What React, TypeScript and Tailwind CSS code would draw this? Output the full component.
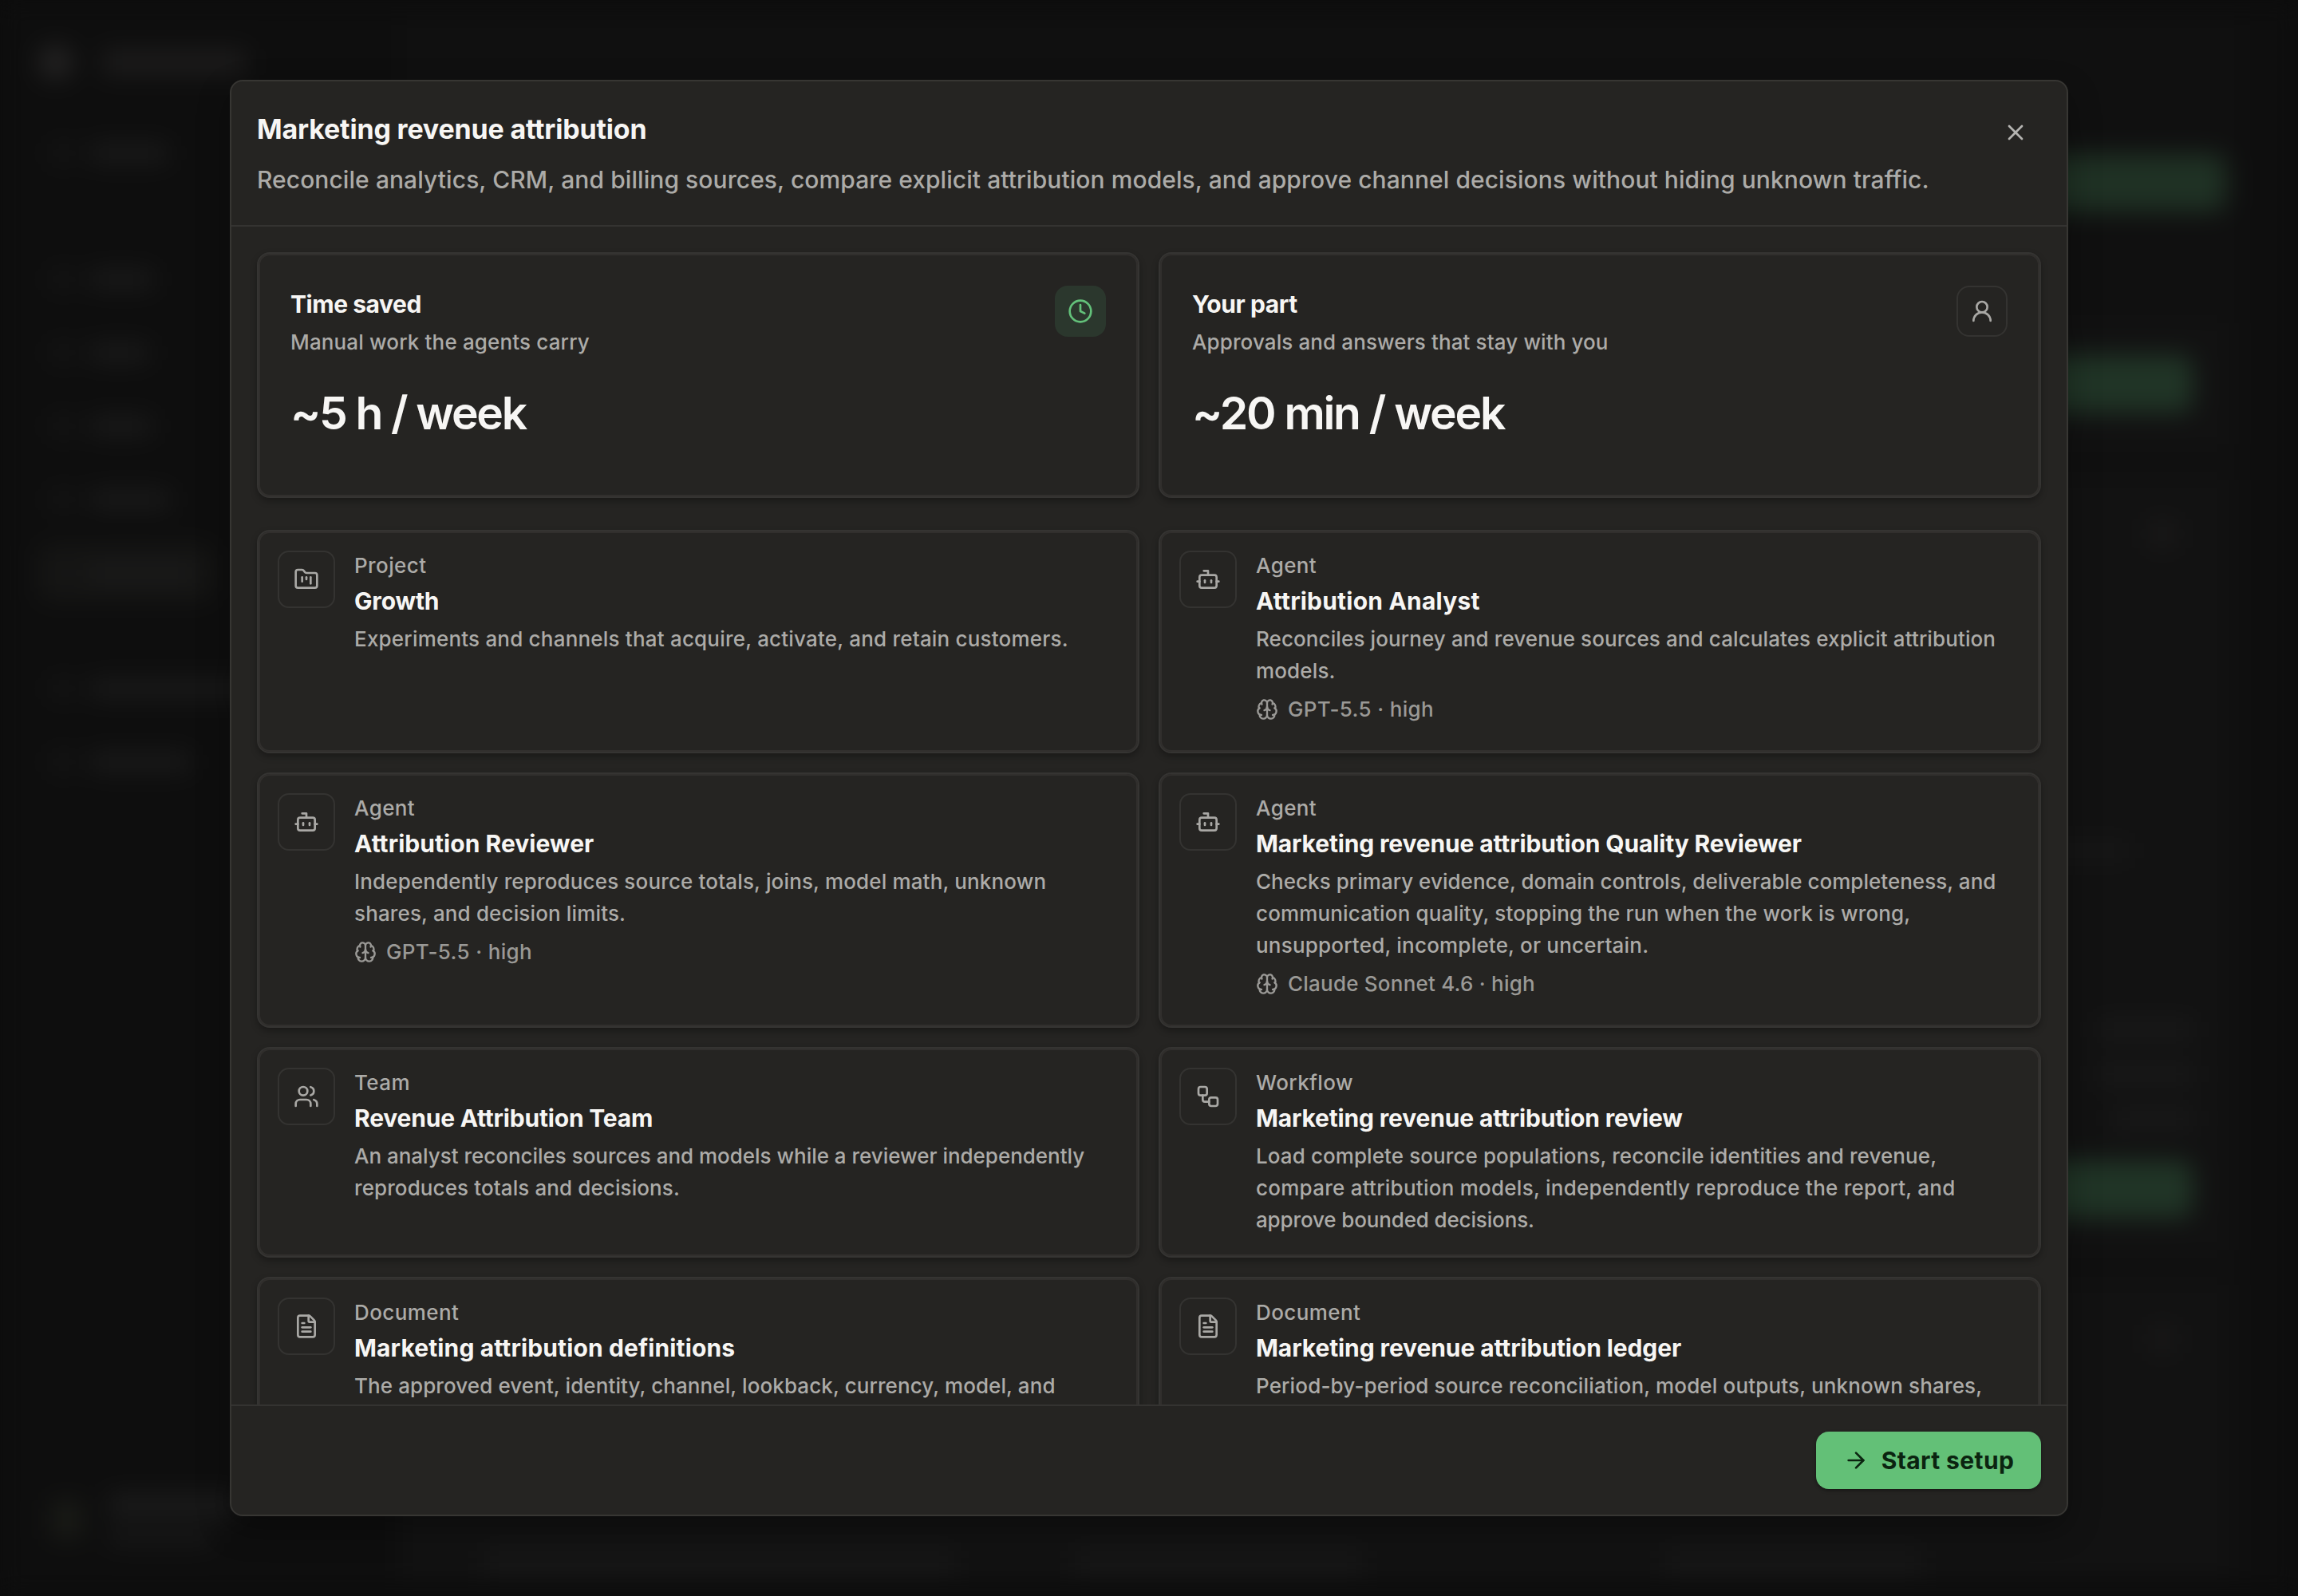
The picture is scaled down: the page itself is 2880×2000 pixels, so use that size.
import clsx from 'clsx';
import {
  ArrowRight,
  Bot,
  Brain,
  Clock,
  FileText,
  FolderKanban,
  UserRound,
  Users,
  Workflow,
  X,
  type LucideIcon,
} from 'lucide-react';

type Line = { text: string; spacing: string };

type Item = {
  icon: LucideIcon;
  kind: string;
  name: Line;
  lines: Line[];
  model?: Line;
};

const rows: { height: string; items: Item[] }[] = [
  {
    height: 'h-[280px]',
    items: [
      {
        icon: FolderKanban,
        kind: 'Project',
        name: { text: 'Growth', spacing: 'tracking-[-0.15px]' },
        lines: [
          { text: 'Experiments and channels that acquire, activate, and retain customers.', spacing: 'tracking-[0.2px]' },
        ],
      },
      {
        icon: Bot,
        kind: 'Agent',
        name: { text: 'Attribution Analyst', spacing: 'tracking-[0.21px]' },
        lines: [
          { text: 'Reconciles journey and revenue sources and calculates explicit attribution', spacing: 'tracking-[0.1px]' },
          { text: 'models.', spacing: 'tracking-[0.15px]' },
        ],
        model: { text: 'GPT-5.5 · high', spacing: 'tracking-[0.35px]' },
      },
    ],
  },
  {
    height: 'h-[320px]',
    items: [
      {
        icon: Bot,
        kind: 'Agent',
        name: { text: 'Attribution Reviewer', spacing: 'tracking-[0.05px]' },
        lines: [
          { text: 'Independently reproduces source totals, joins, model math, unknown', spacing: 'tracking-[0.15px]' },
          { text: 'shares, and decision limits.', spacing: 'tracking-[0.14px]' },
        ],
        model: { text: 'GPT-5.5 · high', spacing: 'tracking-[0.35px]' },
      },
      {
        icon: Bot,
        kind: 'Agent',
        name: { text: 'Marketing revenue attribution Quality Reviewer', spacing: 'tracking-[-0.15px]' },
        lines: [
          { text: 'Checks primary evidence, domain controls, deliverable completeness, and', spacing: 'tracking-[0.03px]' },
          { text: 'communication quality, stopping the run when the work is wrong,', spacing: 'tracking-[0.15px]' },
          { text: 'unsupported, incomplete, or uncertain.', spacing: 'tracking-[0.2px]' },
        ],
        model: { text: 'Claude Sonnet 4.6 · high', spacing: 'tracking-[0.22px]' },
      },
    ],
  },
  {
    height: 'h-[264px]',
    items: [
      {
        icon: Users,
        kind: 'Team',
        name: { text: 'Revenue Attribution Team', spacing: 'tracking-[-0.2px]' },
        lines: [
          { text: 'An analyst reconciles sources and models while a reviewer independently', spacing: 'tracking-[-0.02px]' },
          { text: 'reproduces totals and decisions.', spacing: 'tracking-[0.1px]' },
        ],
      },
      {
        icon: Workflow,
        kind: 'Workflow',
        name: { text: 'Marketing revenue attribution review', spacing: 'tracking-[-0.17px]' },
        lines: [
          { text: 'Load complete source populations, reconcile identities and revenue,', spacing: 'tracking-[0.09px]' },
          { text: 'compare attribution models, independently reproduce the report, and', spacing: 'tracking-[0.25px]' },
          { text: 'approve bounded decisions.', spacing: 'tracking-[-0.14px]' },
        ],
      },
    ],
  },
  {
    height: 'h-[264px]',
    items: [
      {
        icon: FileText,
        kind: 'Document',
        name: { text: 'Marketing attribution definitions', spacing: 'tracking-[0.12px]' },
        lines: [
          { text: 'The approved event, identity, channel, lookback, currency, model, and', spacing: 'tracking-[0.09px]' },
        ],
      },
      {
        icon: FileText,
        kind: 'Document',
        name: { text: 'Marketing revenue attribution ledger', spacing: 'tracking-[-0.1px]' },
        lines: [
          { text: 'Period-by-period source reconciliation, model outputs, unknown shares,', spacing: 'tracking-[0.15px]' },
        ],
      },
    ],
  },
];

const cardClass =
  'rounded-[16px] border-2 border-[#353432] bg-[#252422] shadow-[0_4px_8px_rgba(0,0,0,0.3),inset_0_0_0_2px_#312f2d]';

type StatProps = { title: Line; hint: Line; value: Line; icon: LucideIcon; green?: boolean };

function StatCard({ title, hint, value, icon: Icon, green }: StatProps) {
  return (
    <div className={clsx(cardClass, 'flex h-[308px] items-start justify-between p-10')}>
      <div className="flex flex-col">
        <h3 className={clsx('text-[30px] leading-[46px] font-[650] text-[#f7f6f4]', title.spacing)}>{title.text}</h3>
        <p className={clsx('mt-[3px] text-[26px] leading-[44px] font-[450] text-[#acaba8]', hint.spacing)}>{hint.text}</p>
        <p className={clsx('mt-[27px] text-[57px] leading-[80px] font-semibold text-[#f7f6f4]', value.spacing)}>{value.text}</p>
      </div>
      <div
        className={clsx(
          'flex size-16 items-center justify-center rounded-[16px]',
          green ? 'bg-[#2b372d] text-[#63c17a]' : 'border-2 border-[#343331] text-[#a9a8a5]',
        )}
      >
        <Icon size={32} strokeWidth={2} />
      </div>
    </div>
  );
}

function ItemCard({ item, height }: { item: Item; height: string }) {
  const Icon = item.icon;
  return (
    <div className={clsx(cardClass, height, 'flex items-start gap-6 p-6')}>
      <div className="flex size-[72px] shrink-0 items-center justify-center rounded-[14px] border-2 border-[#343331] text-[#a9a8a5]">
        <Icon size={32} strokeWidth={2} />
      </div>
      <div className="whitespace-nowrap">
        <p className="text-[26px] leading-[38px] font-medium tracking-[0.4px] text-[#acaba8]">{item.kind}</p>
        <h3 className={clsx('mt-[2px] text-[30px] leading-[46px] font-[650] text-[#f7f6f4]', item.name.spacing)}>{item.name.text}</h3>
        <div className="mt-[5px] text-[26px] leading-[40px] font-[450] text-[#acaba8]">
          {item.lines.map((line) => (
            <p key={line.text} className={line.spacing}>
              {line.text}
            </p>
          ))}
        </div>
        {item.model && (
          <div className="mt-2 flex items-center gap-3 text-[26px] leading-[40px] font-medium text-[#9a9996]">
            <Brain size={28} strokeWidth={2} />
            <span className={item.model.spacing}>{item.model.text}</span>
          </div>
        )}
      </div>
    </div>
  );
}

function NavRow({ width }: { width: string }) {
  return (
    <div className="flex h-[72px] items-center gap-5 px-4">
      <div className="size-7 rounded-md bg-[#151515]" />
      <div className={clsx('h-6 rounded bg-[#1a1a1a]', width)} />
    </div>
  );
}

// Dimmed, blurred page that sits behind the dialog
function Backdrop() {
  return (
    <div className="absolute inset-0 flex overflow-hidden bg-[#0e0e0e] blur-[15px]">
      <aside className="flex w-[500px] shrink-0 flex-col px-12 pt-10 pb-16">
        <div className="flex h-[76px] items-center gap-9">
          <div className="size-11 rounded-full bg-[#232222]" />
          <div className="h-8 w-[180px] rounded bg-[#1c1b1b]" />
        </div>
        <div className="mt-10">
          <NavRow width="w-[98px]" />
        </div>
        <div className="mt-[86px] flex flex-col gap-5">
          <NavRow width="w-[80px]" />
          <NavRow width="w-[74px]" />
          <NavRow width="w-[78px]" />
          <NavRow width="w-[100px]" />
          <div className="w-[220px] rounded-[14px] bg-[#151514]">
            <NavRow width="w-[130px]" />
          </div>
        </div>
        <div className="mt-[73px] flex flex-col gap-5">
          <NavRow width="w-[260px]" />
          <NavRow width="w-[126px]" />
        </div>
        <div className="mt-auto flex items-center gap-8 px-4">
          <div className="h-12 w-10 rounded bg-[#191a16]" />
          <div className="flex flex-col gap-4">
            <div className="h-7 w-[160px] rounded bg-[#1b1b1b]" />
            <div className="h-5 w-[130px] rounded bg-[#181818]" />
          </div>
        </div>
      </aside>
      <section className="my-6 mr-[70px] flex flex-1 flex-col items-end gap-11 overflow-hidden bg-[#101010] pt-[169px] pr-5">
        <div className="h-[72px] w-[440px] shrink-0 rounded-[16px] bg-[#1f3124]" />
        <div className="mt-24 flex w-full shrink-0 justify-end bg-[#121212] pt-10 pr-[42px] pb-10">
          <div className="h-[72px] w-[400px] rounded-[16px] bg-[#203426]" />
        </div>
        <div className="flex h-[965px] w-full shrink-0 flex-col items-end bg-[#121212] px-[42px] pt-[50px] pb-10">
          <div className="mr-5 size-9 rounded bg-[#191818]" />
          <div className="mt-auto mr-20 h-6 w-[160px] bg-[#171717]" />
          <div className="mt-[200px] flex flex-col items-end gap-8">
            <div className="h-6 w-[120px] bg-[#191919]" />
            <div className="h-6 w-[120px] bg-[#191919]" />
            <div className="h-6 w-[100px] bg-[#191919]" />
            <div className="mt-2 h-[72px] w-[400px] rounded-[16px] bg-[#203426]" />
          </div>
        </div>
        <div className="flex h-[400px] w-full shrink-0 flex-col items-end gap-[246px] bg-[#121212] px-[42px] pt-[50px]">
          <div className="mr-5 size-9 shrink-0 rounded bg-[#181717]" />
          <div className="grid w-full shrink-0 grid-cols-3 gap-20 pl-16">
            <div className="h-8 w-[590px] bg-[#171717]" />
            <div className="h-8 w-[360px] bg-[#171717]" />
            <div className="h-8 w-[320px] bg-[#171717]" />
          </div>
        </div>
      </section>
    </div>
  );
}

export default function App() {
  return (
    <div className="relative flex h-[2000px] w-[2880px] items-center justify-center overflow-hidden bg-[#0c0c0c] font-['Inter',sans-serif]">
      <Backdrop />
      <div className="relative flex h-[1800px] w-[2304px] flex-col overflow-hidden rounded-[16px] border-2 border-[#373633] bg-[#252422] shadow-[0_16px_40px_rgba(0,0,0,0.3)]">
        <header className="flex h-[182px] shrink-0 items-start justify-between border-b-2 border-[#343331] px-8 pt-8">
          <div className="whitespace-nowrap">
            <h2 className="mt-1 text-[34px] leading-[48px] font-[650] tracking-[-0.18px] text-[#f7f6f4]">
              Marketing revenue attribution
            </h2>
            <p className="mt-[15px] text-[30px] leading-[48px] font-[450] tracking-[0.07px] text-[#acaba8]">
              Reconcile analytics, CRM, and billing sources, compare explicit attribution models, and approve channel decisions without hiding unknown traffic.
            </p>
          </div>
          <button className="flex size-16 shrink-0 items-center justify-center text-[#b5b4b1]">
            <X size={32} strokeWidth={2} />
          </button>
        </header>

        <main className="flex min-h-0 flex-1 flex-col gap-10 overflow-hidden px-8 pt-8">
          <div className="grid shrink-0 grid-cols-2 gap-6">
            <StatCard
              title={{ text: 'Time saved', spacing: 'tracking-[-0.45px]' }}
              hint={{ text: 'Manual work the agents carry', spacing: 'tracking-[0.15px]' }}
              value={{ text: '~5 h / week', spacing: 'tracking-[-2.35px]' }}
              icon={Clock}
              green
            />
            <StatCard
              title={{ text: 'Your part', spacing: 'tracking-[-0.4px]' }}
              hint={{ text: 'Approvals and answers that stay with you', spacing: 'tracking-[0.11px]' }}
              value={{ text: '~20 min / week', spacing: 'tracking-[-2.25px]' }}
              icon={UserRound}
            />
          </div>
          <div className="grid shrink-0 grid-cols-2 gap-6">
            {rows.map((row) => row.items.map((item) => <ItemCard key={item.name.text} item={item} height={row.height} />))}
          </div>
        </main>

        <footer className="flex h-[138px] shrink-0 items-center justify-end border-t-2 border-[#343331] px-8">
          <button className="flex h-[72px] w-[282px] items-center justify-center gap-4 rounded-[16px] bg-[#63c077] text-[30px] font-[650] tracking-[0.4px] text-[#0b2410] shadow-[0_2px_4px_rgba(0,0,0,0.4)]">
            <ArrowRight size={32} strokeWidth={2} />
            <span>Start setup</span>
          </button>
        </footer>
      </div>
    </div>
  );
}
